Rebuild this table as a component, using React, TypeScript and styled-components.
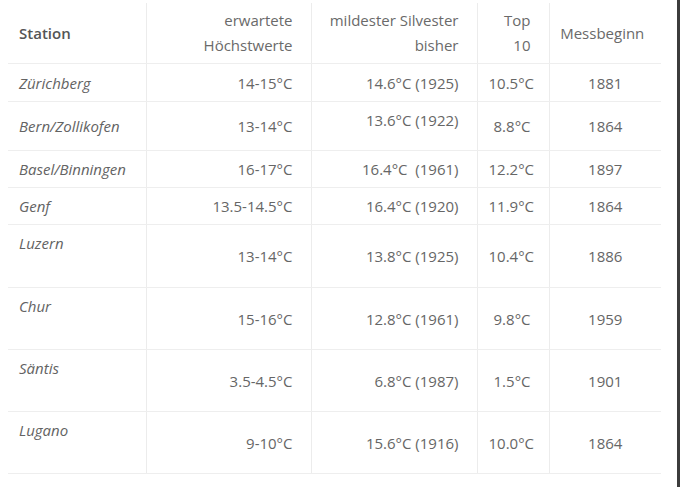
import {FC} from 'react';
import {createGlobalStyle, styled} from 'styled-components';

type Align = 'left' | 'right' | 'center';
type VAlign = 'top' | 'middle';

interface Station {
  name: string;
  expected: string;
  mildest: string;
  top: string;
  since: string;
  height: number;
  nameAlign: VAlign;
  mildestAlign?: VAlign;
}

const stations: Station[] = [
  {name: 'Zürichberg', expected: '14-15°C', mildest: '14.6°C (1925)', top: '10.5°C', since: '1881', height: 38, nameAlign: 'middle'},
  {name: 'Bern/Zollikofen', expected: '13-14°C', mildest: '13.6°C (1922)', top: '8.8°C', since: '1864', height: 49, nameAlign: 'middle', mildestAlign: 'top'},
  {name: 'Basel/Binningen', expected: '16-17°C', mildest: '16.4°C\u00a0 (1961)', top: '12.2°C', since: '1897', height: 37, nameAlign: 'middle'},
  {name: 'Genf', expected: '13.5-14.5°C', mildest: '16.4°C (1920)', top: '11.9°C', since: '1864', height: 37, nameAlign: 'middle'},
  {name: 'Luzern', expected: '13-14°C', mildest: '13.8°C (1925)', top: '10.4°C', since: '1886', height: 63, nameAlign: 'top'},
  {name: 'Chur', expected: '15-16°C', mildest: '12.8°C (1961)', top: '9.8°C', since: '1959', height: 62, nameAlign: 'top'},
  {name: 'Säntis', expected: '3.5-4.5°C', mildest: '6.8°C (1987)', top: '1.5°C', since: '1901', height: 62, nameAlign: 'top'},
  {name: 'Lugano', expected: '9-10°C', mildest: '15.6°C (1916)', top: '10.0°C', since: '1864', height: 62, nameAlign: 'top'},
];

const App: FC = () => (
  <>
    <GlobalStyle />
    <Frame>
      <Table>
        <colgroup>
          <col style={{width: 138}} />
          <col style={{width: 165}} />
          <col style={{width: 166}} />
          <col style={{width: 72}} />
          <col style={{width: 112}} />
        </colgroup>
        <thead>
          <Row $height={60}>
            <HeadCell $align="left" $bold>
              Station
            </HeadCell>
            <HeadCell $align="right">
              erwartete
              <br />
              Höchstwerte
            </HeadCell>
            <HeadCell $align="right">
              mildester Silvester
              <br />
              bisher
            </HeadCell>
            <HeadCell $align="right">
              Top
              <br />
              10
            </HeadCell>
            <HeadCell $align="center">Messbeginn</HeadCell>
          </Row>
        </thead>
        <tbody>
          {stations.map(s => (
            <Row key={s.name} $height={s.height}>
              <Cell $align="left" $valign={s.nameAlign}>
                <Name>{s.name}</Name>
              </Cell>
              <Cell $align="right">{s.expected}</Cell>
              <Cell $align="right" $valign={s.mildestAlign}>
                {s.mildest}
              </Cell>
              <Cell $align="right">{s.top}</Cell>
              <Cell $align="center">{s.since}</Cell>
            </Row>
          ))}
        </tbody>
      </Table>
    </Frame>
  </>
);

export default App;

const GlobalStyle = createGlobalStyle`
  html, body {
    margin: 0;
    padding: 0;
    background: #ffffff;
  }
  body {
    font-family: "Open Sans", "Liberation Sans", sans-serif;
    font-size: 15px;
    color: #666666;
  }
`;

const Frame = styled.div`
  box-sizing: border-box;
  width: 680px;
  height: 487px;
  padding: 3px 0 0 8px;
  border-right: 3px solid #3c3c3c;
  overflow: hidden;
`;

const Table = styled.table`
  width: 653px;
  table-layout: fixed;
  border-collapse: collapse;
`;

const Row = styled.tr<{$height: number}>`
  height: ${p => p.$height}px;
`;

const HeadCell = styled.th<{$align: Align; $bold?: boolean}>`
  padding: 5px 18px 5px 11px;
  text-align: ${p => p.$align};
  vertical-align: middle;
  font-weight: ${p => (p.$bold ? 600 : 400)};
  color: ${p => (p.$bold ? '#555555' : '#6a6a6a')};
  line-height: 25px;
  white-space: nowrap;
  border-bottom: 1px solid #eeeeee;
  & + & {
    border-left: 1px solid #ececec;
  }
  &:nth-child(5) {
    padding: 5px 12px 5px 6px;
  }
`;

const Cell = styled.td<{$align: Align; $valign?: VAlign}>`
  padding: 6px 18px 5px 11px;
  text-align: ${p => p.$align};
  vertical-align: ${p => p.$valign ?? 'middle'};
  line-height: 25px;
  white-space: nowrap;
  border-bottom: 1px solid #eeeeee;
  & + & {
    border-left: 1px solid #ececec;
  }
  &:nth-child(5) {
    padding: 6px 8px 5px;
  }
`;

const Name = styled.em`
  font-style: italic;
  color: #636363;
`;
